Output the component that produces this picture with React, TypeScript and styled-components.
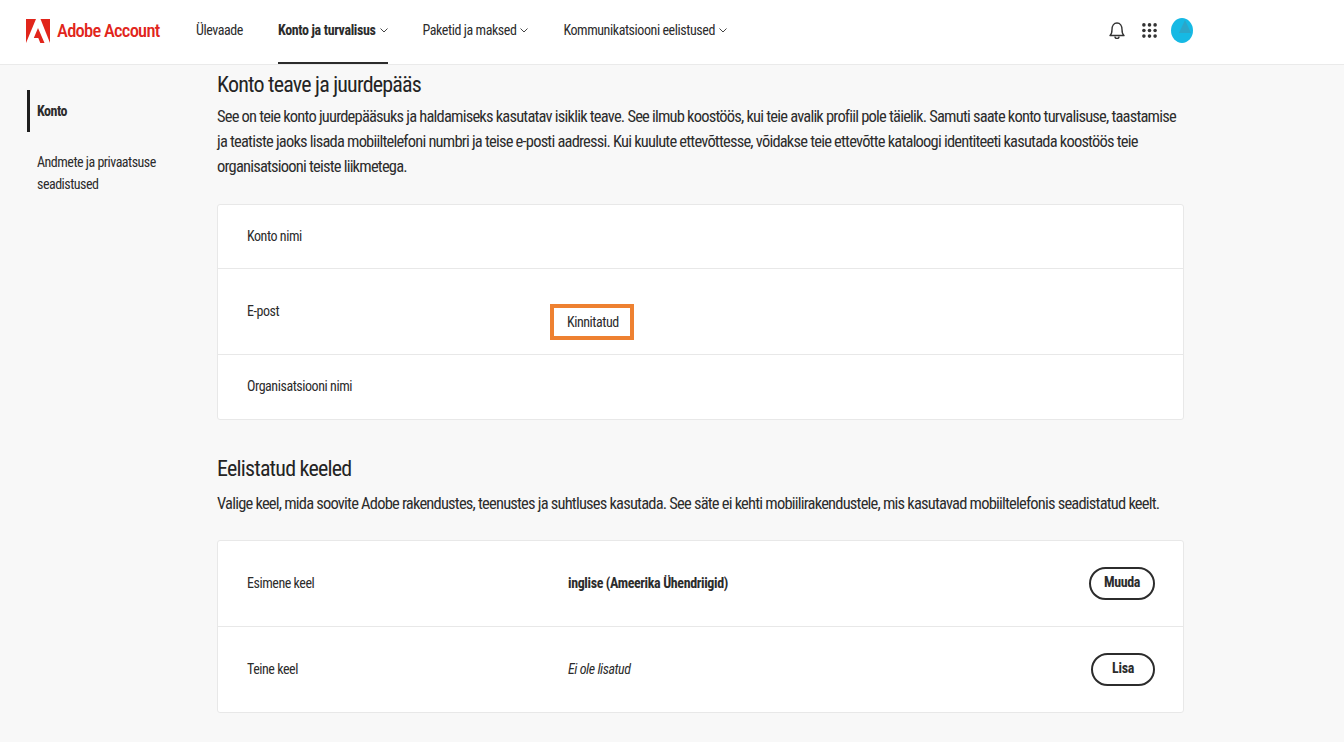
import React from 'react';
import styled, { createGlobalStyle } from 'styled-components';

const FONT = '"Liberation Sans Narrow", "Roboto Condensed", Lato, sans-serif';

const GlobalStyle = createGlobalStyle`
  html, body {
    margin: 0;
    padding: 0;
    height: 742px;
    overflow: hidden;
    background: #f8f8f8;
    color: #2c2c2c;
    font-family: ${FONT};
  }
`;

const Header = styled.header`
  height: 64px;
  display: flex;
  align-items: stretch;
  padding: 0 151px 0 26px;
  background: #fff;
  border-bottom: 1px solid #eaeaea;
`;

const Brand = styled.div`
  display: flex;
  align-items: center;
  gap: 7px;
  width: 170px;
  box-sizing: border-box;
  padding-bottom: 2px;
  color: #e1251b;
  font-size: 18.5px;
  font-weight: 500;
  letter-spacing: -0.75px;
`;

const Nav = styled.nav`
  display: flex;
  gap: 35px;
  flex: 1;
`;

const NavItem = styled.div<{ $active?: boolean }>`
  display: flex;
  align-items: center;
  gap: 4px;
  height: 64px;
  box-sizing: border-box;
  padding-bottom: ${(p) => (p.$active ? '2px' : '4px')};
  font-size: 14px;
  letter-spacing: ${(p) => (p.$active ? '-0.35px' : '-0.43px')};
  font-weight: ${(p) => (p.$active ? 700 : 400)};
  border-bottom: ${(p) => (p.$active ? '2px solid #2c2c2c' : 'none')};
`;

const Tools = styled.div`
  display: flex;
  align-items: center;
  gap: 14px;
  padding-bottom: 3px;
`;

const BellSlot = styled.span`
  display: flex;
  margin-right: 3px;
`;

const Body = styled.div`
  display: flex;
  padding-left: 27px;
`;

const Side = styled.aside`
  width: 190px;
  flex: none;
  padding-top: 25px;
`;

const SideItem = styled.div<{ $active?: boolean }>`
  box-sizing: border-box;
  width: 140px;
  padding-left: ${(p) => (p.$active ? '7px' : '10px')};
  font-size: 14px;
  line-height: 22px;
  letter-spacing: -0.5px;
  font-weight: ${(p) => (p.$active ? 700 : 400)};
  border-left: ${(p) => (p.$active ? '3px solid #1f1f1f' : 'none')};
  height: ${(p) => (p.$active ? '42px' : 'auto')};
  display: flex;
  align-items: center;
  margin-bottom: 19px;
`;

const Main = styled.main`
  width: 967px;
  padding-top: 7px;
`;

const Title = styled.h2`
  margin: 0;
  font-size: 22px;
  line-height: 26px;
  font-weight: 400;
  letter-spacing: -0.8px;
  color: #242424;
`;

const Lead = styled.p<{ $top: number; $bottom: number }>`
  margin: ${(p) => p.$top}px 0 ${(p) => p.$bottom}px;
  font-size: 16.5px;
  line-height: 25px;
  letter-spacing: -0.8px;
  color: #2c2c2c;
`;

const Card = styled.section`
  background: #fff;
  border: 1px solid #e8e8e8;
  border-radius: 3px;
  margin-bottom: 36px;
`;

const Row = styled.div<{ $h: number }>`
  display: grid;
  grid-template-columns: 321px 1fr auto;
  align-items: center;
  box-sizing: border-box;
  height: ${(p) => p.$h}px;
  padding: 0 28px 2px 29px;
  font-size: 14px;
  letter-spacing: -0.45px;
  & + & {
    border-top: 1px solid #e8e8e8;
  }
`;

const EmailLabel = styled.span`
  align-self: start;
  margin-top: 34px;
`;

const Badge = styled.span`
  justify-self: start;
  margin: 22px 0 0 -18px;
  padding: 5px 11px 5px 13px;
  border: 4px solid #ee8131;
  background: #fff;
  line-height: 18px;
`;

const Value = styled.span`
  font-weight: 700;
  letter-spacing: -0.37px;
`;

const Muted = styled.span`
  font-style: italic;
`;

const Pill = styled.button<{ $w: number }>`
  box-sizing: border-box;
  width: ${(p) => p.$w}px;
  height: 33px;
  margin-top: 2px;
  padding: 0 0 4px;
  border: 2px solid #2c2c2c;
  border-radius: 17px;
  background: #fff;
  color: #2c2c2c;
  font: 700 14px ${FONT};
  letter-spacing: -0.35px;
`;

const Chevron = () => (
  <svg width="8" height="6" viewBox="0 0 8 6" fill="none" stroke="#444" strokeWidth="1">
    <path d="M0.5 1.5 L4 5 L7.5 1.5" />
  </svg>
);

const AdobeLogo = () => (
  <svg width="24" height="24" viewBox="0 0 24 24" fill="#e1251b">
    <path d="M0 0H10L0 24Z" />
    <path d="M14.5 0H24V24Z" />
    <path d="M12 9L18.5 24H14.3L12.3 19H7.8Z" />
  </svg>
);

const Bell = () => (
  <svg width="16" height="19" viewBox="0 0 16 19" fill="none" stroke="#333" strokeWidth="1.4">
    <path d="M1 14.5C3 13 3 11 3 8.5C3 5 4.8 2 8 2C11.2 2 13 5 13 8.5C13 11 13 13 15 14.5Z" strokeLinejoin="round" />
    <path d="M6 15.5C6 18 10 18 10 15.5" />
  </svg>
);

const Apps = () => (
  <svg width="15" height="15" viewBox="0 0 15 15" fill="#333">
    {[1.9, 7.5, 13.1].flatMap((y) =>
      [1.9, 7.5, 13.1].map((x) => <circle key={`${x}-${y}`} cx={x} cy={y} r="1.8" />),
    )}
  </svg>
);

const Avatar = () => (
  <svg width="22" height="25" viewBox="0 0 22 25">
    <ellipse cx="11" cy="12.5" rx="11" ry="12.5" fill="#16b9e4" />
    <path d="M14 2L20 15H8Z" fill="#2ba6c9" />
  </svg>
);

const App: React.FC = () => {
  return (
    <>
      <GlobalStyle />
      <Header>
        <Brand>
          <AdobeLogo />
          Adobe Account
        </Brand>
        <Nav>
          <NavItem>Ülevaade</NavItem>
          <NavItem $active>
            Konto ja turvalisus <Chevron />
          </NavItem>
          <NavItem>
            Paketid ja maksed <Chevron />
          </NavItem>
          <NavItem>
            Kommunikatsiooni eelistused <Chevron />
          </NavItem>
        </Nav>
        <Tools>
          <BellSlot>
            <Bell />
          </BellSlot>
          <Apps />
          <Avatar />
        </Tools>
      </Header>
      <Body>
        <Side>
          <SideItem $active>Konto</SideItem>
          <SideItem>Andmete ja privaatsuse seadistused</SideItem>
        </Side>
        <Main>
          <Title>Konto teave ja juurdepääs</Title>
          <Lead $top={6} $bottom={25}>
            See on teie konto juurdepääsuks ja haldamiseks kasutatav isiklik teave. See ilmub koostöös, kui teie avalik
            profiil pole täielik. Samuti saate konto turvalisuse, taastamise ja teatiste jaoks lisada mobiiltelefoni
            numbri ja teise e-posti aadressi. Kui kuulute ettevõttesse, võidakse teie ettevõtte kataloogi identiteeti
            kasutada koostöös teie organisatsiooni teiste liikmetega.
          </Lead>
          <Card>
            <Row $h={63}>
              <span>Konto nimi</span>
            </Row>
            <Row $h={86}>
              <EmailLabel>E-post</EmailLabel>
              <Badge>Kinnitatud</Badge>
            </Row>
            <Row $h={65}>
              <span>Organisatsiooni nimi</span>
            </Row>
          </Card>
          <Title>Eelistatud keeled</Title>
          <Lead $top={9} $bottom={24}>
            Valige keel, mida soovite Adobe rakendustes, teenustes ja suhtluses kasutada. See säte ei kehti
            mobiilirakendustele, mis kasutavad mobiiltelefonis seadistatud keelt.
          </Lead>
          <Card>
            <Row $h={85}>
              <span>Esimene keel</span>
              <Value>inglise (Ameerika Ühendriigid)</Value>
              <Pill $w={66}>Muuda</Pill>
            </Row>
            <Row $h={86}>
              <span>Teine keel</span>
              <Muted>Ei ole lisatud</Muted>
              <Pill $w={64}>Lisa</Pill>
            </Row>
          </Card>
        </Main>
      </Body>
    </>
  );
};

export default App;
